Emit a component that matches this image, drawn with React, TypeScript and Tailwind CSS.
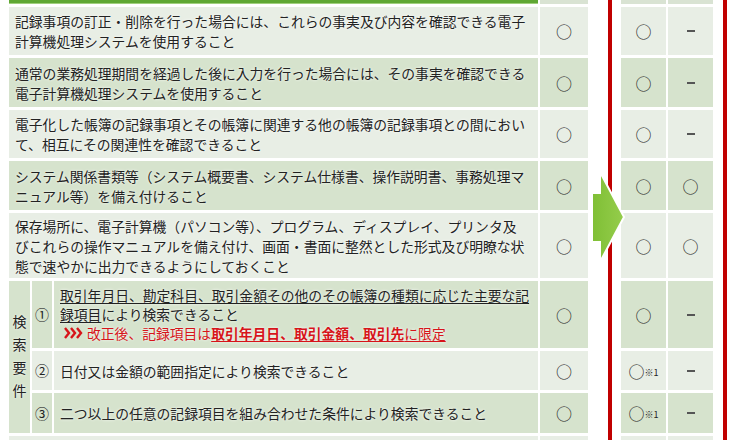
const font = { fontFamily: '"Noto Sans CJK JP", "Noto Sans", sans-serif' }

const L = 'bg-[#e8eee5]'
const D = 'bg-[#d6e3cd]'

function Maru({ note }: { note?: boolean }) {
  return (
    <span className="flex items-center text-[16px] leading-none text-[#222]">
      ○{note && <span className="text-[9px] leading-none mt-[3px]">※1</span>}
    </span>
  )
}

function Dash() {
  return <div className="w-[8px] h-[2px] bg-[#555]" />
}

function Cell({ bg, children, className = '' }: { bg: string; children?: React.ReactNode; className?: string }) {
  return <div className={`${bg} flex items-center justify-center ${className}`}>{children}</div>
}

function Chevrons() {
  return (
    <svg width="20" height="12" viewBox="0 0 20 12" className="inline-block mr-[4px] align-[0px]">
      <g fill="none" stroke="#d7141a" strokeWidth="2.4" strokeLinejoin="miter">
        <polyline points="2,1 6,6 2,11" />
        <polyline points="8,1 12,6 8,11" />
        <polyline points="14,1 18,6 14,11" />
      </g>
    </svg>
  )
}

const rows = 'grid-rows-[4px_48px_49px_48px_49px_65px_67px_39px_40px_20px] gap-y-[3px]'

export default function App() {
  const text = 'flex items-center px-[6px] text-[13.8px] leading-[20px] text-[#222] [text-shadow:0_0_3px_#fff]'

  // right-hand pair of columns: [left, right, bg]
  const right: [React.ReactNode, React.ReactNode, string][] = [
    [null, null, 'bg-[#d9e3d3]'],
    [<Maru />, <Dash />, L],
    [<Maru />, <Dash />, D],
    [<Maru />, <Dash />, L],
    [<Maru />, <Maru />, D],
    [<Maru />, <Maru />, L],
    [<Maru />, <Dash />, D],
    [<Maru note />, <Dash />, L],
    [<Maru note />, <Dash />, D],
    [null, null, L],
  ]

  return (
    <div className="relative w-[740px] h-[440px] overflow-hidden bg-white flex pl-[9px]" style={font}>
      {/* left table */}
      <div className={`grid grid-cols-[21px_20px_484px_48px] gap-x-[2px] ${rows}`}>
        <div className="col-span-3 bg-[#5fa733] border-b border-[#9fcf7c]" />
        <Cell bg="bg-[#d9e3d3]" />

        <div className={`col-span-3 ${L} ${text}`}>
          記録事項の訂正・削除を行った場合には、これらの事実及び内容を確認できる電子
          <br />
          計算機処理システムを使用すること
        </div>
        <Cell bg={L}><Maru /></Cell>

        <div className={`col-span-3 ${D} ${text}`}>
          通常の業務処理期間を経過した後に入力を行った場合には、その事実を確認できる
          <br />
          電子計算機処理システムを使用すること
        </div>
        <Cell bg={D}><Maru /></Cell>

        <div className={`col-span-3 ${L} ${text}`}>
          電子化した帳簿の記録事項とその帳簿に関連する他の帳簿の記録事項との間におい
          <br />
          て、相互にその関連性を確認できること
        </div>
        <Cell bg={L}><Maru /></Cell>

        <div className={`col-span-3 ${D} ${text}`}>
          システム関係書類等（システム概要書、システム仕様書、操作説明書、事務処理マ
          <br />
          ニュアル等）を備え付けること
        </div>
        <Cell bg={D}><Maru /></Cell>

        <div className={`col-span-3 ${L} ${text}`}>
          保存場所に、電子計算機（パソコン等）、プログラム、ディスプレイ、プリンタ及
          <br />
          びこれらの操作マニュアルを備え付け、画面・書面に整然とした形式及び明瞭な状
          <br />
          態で速やかに出力できるようにしておくこと
        </div>
        <Cell bg={L}><Maru /></Cell>

        <div className={`row-span-3 ${D} flex flex-col items-center justify-center text-[14px] leading-[23px] text-[#222] pb-[2px] [text-shadow:0_0_3px_#fff]`}>
          <span>検</span>
          <span>索</span>
          <span>要</span>
          <span>件</span>
        </div>
        <Cell bg={D} className="text-[14px] text-[#222]">①</Cell>
        <div className={`${D} flex flex-col justify-center px-[6px] text-[13.8px] leading-[19px] text-[#222] [text-shadow:0_0_3px_#fff]`}>
          <div className="underline decoration-1 underline-offset-2">
            取引年月日、勘定科目、取引金額その他のその帳簿の種類に応じた主要な記
          </div>
          <div>
            <span className="underline decoration-1 underline-offset-2">録項目</span>により検索できること
          </div>
          <div className="pl-[3px] text-[#d7141a]">
            <Chevrons />
            改正後、記録項目は
            <span className="font-bold underline decoration-1 underline-offset-2">取引年月日、取引金額、取引先</span>
            <span className="underline decoration-1 underline-offset-2">に限定</span>
          </div>
        </div>
        <Cell bg={D}><Maru /></Cell>

        <Cell bg={L} className="text-[14px] text-[#222]">②</Cell>
        <div className={`${L} ${text}`}>日付又は金額の範囲指定により検索できること</div>
        <Cell bg={L}><Maru /></Cell>

        <Cell bg={D} className="text-[14px] text-[#222]">③</Cell>
        <div className={`${D} ${text}`}>二つ以上の任意の記録項目を組み合わせた条件により検索できること</div>
        <Cell bg={D}><Maru /></Cell>

        <div className={`col-span-3 ${L}`} />
        <Cell bg={L} />
      </div>

      {/* red framed columns */}
      <div className="ml-[20px] h-[456px] border-x-4 border-[#c00000] pl-[9px] pr-[10px]">
        <div className={`grid grid-cols-[45px_45px] gap-x-[2px] ${rows}`}>
          {right.map(([a, b, bg], i) => (
            <div key={i} className="contents">
              <Cell bg={bg}>{a}</Cell>
              <Cell bg={bg}>{b}</Cell>
            </div>
          ))}
        </div>
      </div>

      {/* arrow */}
      <svg className="absolute left-[586px] top-[168px]" width="42" height="100" viewBox="0 0 42 100">
        <defs>
          <linearGradient id="ag" x1="0" y1="0" x2="1" y2="0">
            <stop offset="0" stopColor="#7fbf35" />
            <stop offset="1" stopColor="#95cd4c" />
          </linearGradient>
        </defs>
        <polygon
          points="14,4 38,49 14,94 14,74 6,74 6,25 14,25"
          fill="url(#ag)"
          stroke="#fff"
          strokeWidth="2"
          strokeLinejoin="miter"
        />
      </svg>
    </div>
  )
}
